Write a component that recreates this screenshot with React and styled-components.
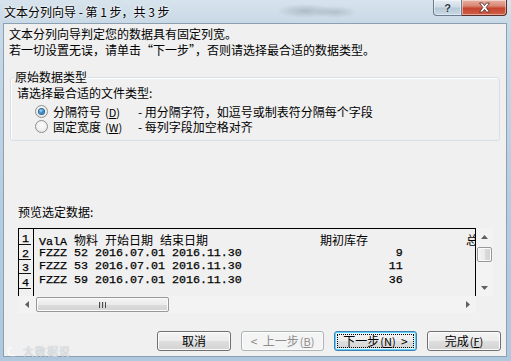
import styled, { createGlobalStyle } from 'styled-components';

const CJK = `"Noto Sans CJK SC", "Liberation Sans", sans-serif`;
const MONO = `"Liberation Mono", "Noto Sans CJK SC", monospace`;

const GlobalStyle = createGlobalStyle`
  html, body { margin: 0; padding: 0; }
  body {
    background: #fff;
    font-family: ${CJK};
    font-size: 12px;
    color: #000;
  }
`;

const Window = styled.div`
  position: relative;
  width: 511px;
  height: 361px;
  box-sizing: border-box;
  display: flex;
  flex-direction: column;
  padding: 0 4px 4px 3px;
  font-family: ${CJK};
  background:
    radial-gradient(ellipse 28px 7px at 305px 11px, rgba(110, 125, 140, 0.35), transparent),
    radial-gradient(ellipse 22px 6px at 335px 12px, rgba(110, 125, 140, 0.3), transparent),
    linear-gradient(180deg, #d7e3ec 0px, #c9d9e6 22px, #b4cce0 60%, #afc8de 100%);
`;

const TitleBar = styled.div`
  flex: none;
  height: 23px;
  display: flex;
  align-items: flex-start;
`;

const Title = styled.div`
  flex: 1;
  padding: 4px 0 0 1px;
  font-size: 12px;
  line-height: 15px;
  color: #000;
  text-shadow: 0 0 5px rgba(255, 255, 255, 0.95), 0 0 2px rgba(255, 255, 255, 0.9);
`;

const CaptionButton = styled.div`
  width: ${p => p.$w}px;
  height: 16px;
  box-sizing: border-box;
  border: 1px solid ${p => (p.$close ? '#5a2e28' : '#6a7d8f')};
  border-top: none;
  border-radius: ${p => (p.$close ? '0 0 4px 0' : '0 0 0 4px')};
  border-left: ${p => (p.$close ? 'none' : undefined)};
  display: flex;
  align-items: center;
  justify-content: center;
  color: #2a3644;
  font-family: "Liberation Sans", sans-serif;
  font-weight: bold;
  font-size: 11px;
  background: ${p =>
    p.$close
      ? 'linear-gradient(180deg, #e8b3a6 0%, #d98572 40%, #c7452f 55%, #d15f48 100%)'
      : 'linear-gradient(180deg, #e6edf3 0%, #cfdbe6 45%, #b7c8d7 55%, #c9d8e5 100%)'};
  box-shadow: inset 0 0 0 1px rgba(255, 255, 255, 0.45);
  text-shadow: 0 0 2px #fff;
`;

const Client = styled.div`
  flex: 1;
  min-height: 0;
  display: flex;
  flex-direction: column;
  background: #f0f0f0;
  border: 1px solid #8ba0b3;
`;

const Intro = styled.div`
  padding: 2px 0 0 5px;
  line-height: 16px;
`;

const GroupBox = styled.section`
  margin: 19px 6px 0;
  padding: 0 0 6px 6px;
  border: 1px solid #d5dfe5;
  border-radius: 3px;
  box-shadow: inset 1px 1px 0 #fff;
`;

const Legend = styled.h3`
  display: table;
  margin: -7px 0 0 -3px;
  padding: 0 1px;
  background: #f0f0f0;
  font-size: 12px;
  font-weight: normal;
  line-height: 12px;
`;

const Prompt = styled.div`
  margin-top: 2px;
  line-height: 15px;
`;

const RadioList = styled.div`
  margin-top: 4px;
  display: flex;
  flex-direction: column;
`;

const RadioRow = styled.div`
  height: 15px;
  display: flex;
  align-items: center;
  padding-left: 18px;
  line-height: 15px;
`;

const RadioDot = styled.span`
  flex: none;
  width: 13px;
  height: 13px;
  box-sizing: border-box;
  border-radius: 50%;
  border: 1px solid #8e8f8f;
  background: radial-gradient(circle at 50% 40%, #fdfdfd 0%, #eeeeee 60%, #d6d6d6 100%);
  display: flex;
  align-items: center;
  justify-content: center;
  margin-right: 5px;
  &::after {
    content: '';
    width: 5px;
    height: 5px;
    border-radius: 50%;
    display: ${p => (p.$checked ? 'block' : 'none')};
    background: radial-gradient(circle at 40% 35%, #a6dcff 0%, #3a8fd0 45%, #1a4f86 100%);
    box-shadow: 0 0 0 1px #2c628b;
  }
`;

const RadioLabel = styled.span`
  width: 85px;
  flex: none;
`;

const Key = styled.span`
  font-size: 11px;
  margin-left: ${p => p.$gap || 0}px;
`;

const Hint = styled.span`
  white-space: pre;
`;

const PreviewLabel = styled.div`
  margin-top: 63px;
  padding-left: 14px;
  line-height: 15px;
`;

const Preview = styled.div`
  margin: 9px 13px 0 14px;
  height: 85px;
  display: grid;
  grid-template-columns: 1fr 17px;
  grid-template-rows: 68px 17px;
`;

const Sheet = styled.div`
  display: flex;
  border: 1px solid #000;
  border-bottom: none;
  overflow: hidden;
  min-width: 0;
`;

const NumCol = styled.div`
  flex: none;
  width: 14px;
  border-right: 1px solid #000;
  padding-top: 4px;
`;

const NumCell = styled.div`
  height: 13.67px;
`;

const Num = styled.span`
  display: block;
  width: 12px;
  height: 11px;
  margin-top: 1px;
  border-bottom: 1px solid #111;
  padding-left: 3px;
  box-sizing: border-box;
  font-family: ${MONO};
  font-size: 11.67px;
  line-height: 11px;
  color: #000;
  -webkit-text-stroke: 0.25px #000;
`;

const DataCol = styled.div`
  flex: 1;
  min-width: 0;
  padding: 4px 0 0 5px;
  overflow: hidden;
`;

const DataRow = styled.div`
  height: 13.67px;
  line-height: 13.67px;
  white-space: pre;
  font-family: ${MONO};
  font-size: 11.67px;
  color: #000;
  -webkit-text-stroke: 0.25px #000;
`;

const Wide = styled.span`
  font-family: ${CJK};
  font-size: 12px;
  color: #000;
  -webkit-text-stroke: 0;
`;

const ScrollBar = styled.div`
  display: flex;
  flex-direction: ${p => (p.$vertical ? 'column' : 'row')};
  background: #f3f3f3;
`;

const ArrowButton = styled.div`
  flex: none;
  width: 17px;
  height: 17px;
  display: flex;
  align-items: center;
  justify-content: center;
  color: #606060;
`;

const Track = styled.div`
  flex: 1;
  display: flex;
  flex-direction: ${p => (p.$vertical ? 'column' : 'row')};
  padding: ${p => (p.$vertical ? '2px 1px 0 1px' : '1px 0 0 1px')};
`;

const Thumb = styled.div`
  box-sizing: border-box;
  width: ${p => (p.$vertical ? '15px' : `${p.$size}px`)};
  height: ${p => (p.$vertical ? `${p.$size}px` : '15px')};
  border: 1px solid #989898;
  border-radius: 2px;
  background: ${p =>
    p.$vertical
      ? 'linear-gradient(90deg, #f4f4f4 0%, #ebebeb 50%, #dbdbdb 51%, #d3d3d3 100%)'
      : 'linear-gradient(180deg, #f4f4f4 0%, #ebebeb 50%, #dbdbdb 51%, #d3d3d3 100%)'};
  box-shadow: inset 0 0 0 1px #fbfbfb;
  display: flex;
  align-items: center;
  justify-content: center;
`;

const Grip = styled.span`
  width: 7px;
  height: 6px;
  background: repeating-linear-gradient(90deg, #4a4a4a 0 1px, #cfcfcf 1px 2px, transparent 2px 3px);
`;

const Corner = styled.div`
  background: #f0f0f0;
`;

const ButtonRow = styled.div`
  margin: 18px 5px 0 0;
  display: flex;
  justify-content: flex-end;
  gap: 10px;
`;

const Button = styled.button`
  width: ${p => p.$w}px;
  height: 20px;
  padding: 0;
  box-sizing: border-box;
  display: flex;
  align-items: stretch;
  font-family: ${CJK};
  font-size: 12px;
  color: ${p => (p.disabled ? '#8d8d8d' : '#000')};
  border: 1px solid ${p => (p.disabled ? '#adb2b5' : p.$default ? '#3c7fb1' : '#707070')};
  border-radius: 3px;
  background: ${p =>
    p.disabled
      ? '#f4f4f4'
      : 'linear-gradient(180deg, #f4f4f4 0%, #ececec 50%, #dfdfdf 51%, #d2d2d2 100%)'};
  box-shadow: ${p =>
    p.$default
      ? 'inset 0 0 0 1px #5fd0f8, inset 0 0 0 2px #e6f6fc'
      : 'inset 0 0 0 1px #fcfcfc'};
`;

const ButtonFace = styled.span`
  flex: 1;
  margin: 2px;
  display: flex;
  align-items: center;
  justify-content: center;
  line-height: 14px;
  white-space: pre;
  border: 1px dotted ${p => (p.$focus ? '#000' : 'transparent')};
`;

const Watermark = styled.div`
  position: absolute;
  left: 6px;
  bottom: 4px;
  display: flex;
  align-items: center;
  gap: 3px;
  font-size: 11px;
  line-height: 12px;
  color: rgba(250, 252, 255, 0.75);
  text-shadow: 0 0 1px rgba(80, 95, 110, 0.6);
  letter-spacing: 1px;
`;

function Arrow({ dir }) {
  const d = {
    up: 'M0 4 L3.5 0 L7 4 Z',
    down: 'M0 0 L7 0 L3.5 4 Z',
    left: 'M4 0 L4 7 L0 3.5 Z',
    right: 'M0 0 L4 3.5 L0 7 Z',
  }[dir];
  const vertical = dir === 'up' || dir === 'down';
  return (
    <svg width={vertical ? 7 : 4} height={vertical ? 4 : 7} viewBox={vertical ? '0 0 7 4' : '0 0 4 7'}>
      <path d={d} fill="currentColor" />
    </svg>
  );
}

function Mnemonic({ k, gap }) {
  return (
    <Key $gap={gap}>
      (<u>{k}</u>)
    </Key>
  );
}

const rows = [
  ['FZZZ', '52', '2016.07.01', '2016.11.30', '9'],
  ['FZZZ', '53', '2016.07.01', '2016.11.30', '11'],
  ['FZZZ', '59', '2016.07.01', '2016.11.30', '36'],
];

const toLine = r => `${r[0]} ${r[1]} ${r[2]} ${r[3]}`.padEnd(52 - r[4].length) + r[4];

export default function App() {
  return (
    <>
      <GlobalStyle />
      <Window>
        <TitleBar>
          <Title>文本分列向导 - 第 1 步，共 3 步</Title>
          <CaptionButton $w={29}>?</CaptionButton>
          <CaptionButton $w={45} $close>
            <svg width="13" height="11" viewBox="0 0 13 11">
              <path
                d="M1.5 1 L4.5 1 L6.5 3.6 L8.5 1 L11.5 1 L8.2 5.5 L11.5 10 L8.5 10 L6.5 7.4 L4.5 10 L1.5 10 L4.8 5.5 Z"
                fill="#fff"
                stroke="#4b2420"
                strokeWidth="0.8"
              />
            </svg>
          </CaptionButton>
        </TitleBar>

        <Client>
          <Intro>
            <div>文本分列向导判定您的数据具有固定列宽。</div>
            <div>若一切设置无误，请单击“下一步”，否则请选择最合适的数据类型。</div>
          </Intro>

          <GroupBox>
            <Legend>原始数据类型</Legend>
            <Prompt>请选择最合适的文件类型:</Prompt>
            <RadioList>
              <RadioRow>
                <RadioDot $checked />
                <RadioLabel>
                  分隔符号<Mnemonic k="D" gap={4} />
                </RadioLabel>
                <Hint>- 用分隔字符，如逗号或制表符分隔每个字段</Hint>
              </RadioRow>
              <RadioRow>
                <RadioDot />
                <RadioLabel>
                  固定宽度<Mnemonic k="W" gap={4} />
                </RadioLabel>
                <Hint>- 每列字段加空格对齐</Hint>
              </RadioRow>
            </RadioList>
          </GroupBox>

          <PreviewLabel>预览选定数据:</PreviewLabel>

          <Preview>
            <Sheet>
              <NumCol>
                {[1, 2, 3, 4].map(n => (
                  <NumCell key={n}>
                    <Num>{n}</Num>
                  </NumCell>
                ))}
              </NumCol>
              <DataCol>
                <DataRow>
                  ValA <Wide>物料</Wide> <Wide>开始日期</Wide> <Wide>结束日期</Wide>
                  {' '.repeat(16)}
                  <Wide>期初库存</Wide>
                  {' '.repeat(14)}
                  <Wide>总</Wide>
                </DataRow>
                {rows.map(r => (
                  <DataRow key={r[1]}>{toLine(r)}</DataRow>
                ))}
              </DataCol>
            </Sheet>
            <ScrollBar $vertical>
              <ArrowButton>
                <Arrow dir="up" />
              </ArrowButton>
              <Track $vertical>
                <Thumb $vertical $size={15} />
              </Track>
              <ArrowButton>
                <Arrow dir="down" />
              </ArrowButton>
            </ScrollBar>
            <ScrollBar>
              <ArrowButton>
                <Arrow dir="left" />
              </ArrowButton>
              <Track>
                <Thumb $size={133}>
                  <Grip />
                </Thumb>
              </Track>
              <ArrowButton>
                <Arrow dir="right" />
              </ArrowButton>
            </ScrollBar>
            <Corner />
          </Preview>

          <ButtonRow>
            <Button $w={74}>
              <ButtonFace>取消</ButtonFace>
            </Button>
            <Button $w={83} disabled>
              <ButtonFace>
                {'<  '}上一步<Mnemonic k="B" gap={1} />
              </ButtonFace>
            </Button>
            <Button $w={83} $default>
              <ButtonFace $focus>
                下一步<Mnemonic k="N" gap={1} />
                {'  >'}
              </ButtonFace>
            </Button>
            <Button $w={74}>
              <ButtonFace>
                完成<Mnemonic k="F" gap={1} />
              </ButtonFace>
            </Button>
          </ButtonRow>
        </Client>

        <Watermark>
          <svg width="14" height="11" viewBox="0 0 14 11">
            <path d="M6 1.5 A4 4 0 1 0 6 9.5 L9 9.5" fill="none" stroke="rgba(250,252,255,0.8)" strokeWidth="1.6" />
          </svg>
          大数据说
        </Watermark>
      </Window>
    </>
  );
}
